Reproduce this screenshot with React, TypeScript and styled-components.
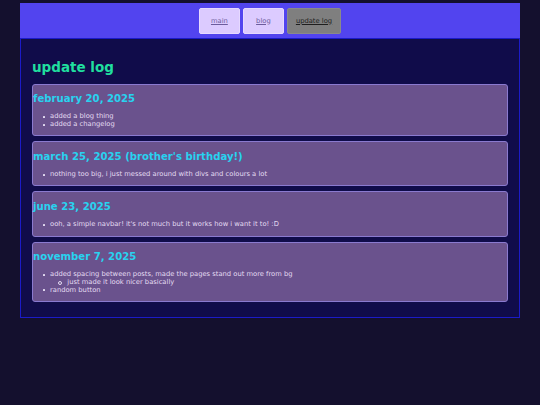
import React from 'react';
import styled, { createGlobalStyle } from 'styled-components';

const GlobalStyle = createGlobalStyle`
  body {
    margin: 3px 0;
    background: #14102e;
    font-family: 'DejaVu Sans', Verdana, sans-serif;
    font-size: 6.75px;
    color: #e4dcf2;
  }
`;

const Page = styled.div`
  width: 500px;
  margin: 0 auto;
`;

const Navbar = styled.nav`
  display: flex;
  justify-content: center;
  gap: 3px;
  padding: 4.5px 0 4px;
  background: #5244ef;
`;

const NavButton = styled.a<{ $active?: boolean }>`
  display: flex;
  align-items: center;
  justify-content: center;
  min-width: 41px;
  height: 26px;
  padding: 0 8px;
  box-sizing: border-box;
  border: 1px solid ${(p) => (p.$active ? '#8a8a8a' : '#e6d9ff')};
  border-radius: 2px;
  background: ${(p) => (p.$active ? '#7f7f7f' : '#dccbff')};
  color: ${(p) => (p.$active ? '#1e1e1e' : '#6c5c9c')};
  text-decoration: underline;
  font-size: 6.75px;
  cursor: pointer;
`;

const Main = styled.main`
  border: 1px solid #1b1bc8;
  background: #100c4a;
  padding: 11px 11px 10px;
`;

const Title = styled.h1`
  margin: 9px 0;
  font-size: 13.5px;
  color: #20df9f;
`;

const Entry = styled.section`
  background: #6a528d;
  border: 1px solid #8a7ad0;
  border-radius: 3px;
  margin-bottom: 5px;
`;

const EntryDate = styled.h2`
  margin: 8.3px 0 9.5px;
  font-size: 10.125px;
  color: #28d2f0;
`;

const List = styled.ul<{ $nested?: boolean }>`
  margin: ${(p) => (p.$nested ? '0' : '6.75px 0')};
  padding-left: ${(p) => (p.$nested ? '17.3px' : '17px')};
  list-style: none;
  line-height: 7.6px;
`;

const Item = styled.li<{ $nested?: boolean }>`
  position: relative;

  &::before {
    content: '';
    position: absolute;
    top: ${(p) => (p.$nested ? '2.3px' : '2.8px')};
    left: ${(p) => (p.$nested ? '-9.5px' : '-6.8px')};
    width: ${(p) => (p.$nested ? '2px' : '2.2px')};
    height: ${(p) => (p.$nested ? '2px' : '2.2px')};
    border-radius: ${(p) => (p.$nested ? '50%' : '0.5px')};
    border: ${(p) => (p.$nested ? '0.6px solid #e4dcf2' : 'none')};
    background: ${(p) => (p.$nested ? 'transparent' : '#e4dcf2')};
  }
`;

const entries: { date: string; items: React.ReactNode[] }[] = [
  { date: 'february 20, 2025', items: ['added a blog thing', 'added a changelog'] },
  { date: "march 25, 2025 (brother's birthday!)", items: ['nothing too big, i just messed around with divs and colours a lot'] },
  { date: 'june 23, 2025', items: ["ooh, a simple navbar! it's not much but it works how i want it to! :D"] },
  {
    date: 'november 7, 2025',
    items: [
      <>
        added spacing between posts, made the pages stand out more from bg
        <List $nested>
          <Item $nested>just made it look nicer basically</Item>
        </List>
      </>,
      'random button',
    ],
  },
];

export default function App() {
  return (
    <>
      <GlobalStyle />
      <Page>
        <Navbar>
          <NavButton>main</NavButton>
          <NavButton>blog</NavButton>
          <NavButton $active>update log</NavButton>
        </Navbar>
        <Main>
          <Title>update log</Title>
          {entries.map((e) => (
            <Entry key={e.date}>
              <EntryDate>{e.date}</EntryDate>
              <List>
                {e.items.map((item, i) => (
                  <Item key={i}>{item}</Item>
                ))}
              </List>
            </Entry>
          ))}
        </Main>
      </Page>
    </>
  );
}
